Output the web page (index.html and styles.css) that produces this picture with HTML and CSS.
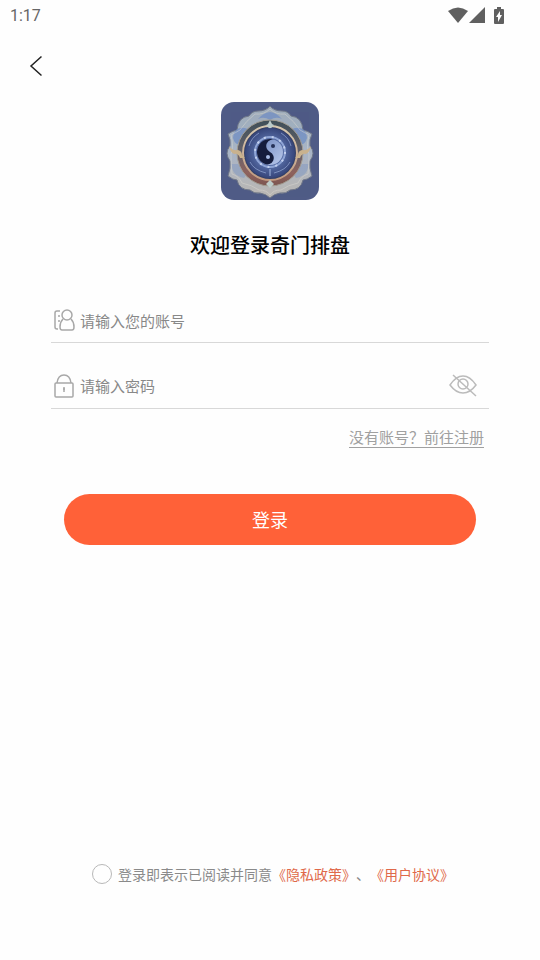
FILE: index.html
```html
<!DOCTYPE html>
<html lang="zh-CN">
<head>
    <meta charset="UTF-8">
    <meta name="viewport" content="width=device-width, initial-scale=1.0">
    <title>登录</title>
    <link rel="stylesheet" href="styles.css">
</head>
<body>

<div class="status-bar">
    <span class="time">1:17</span>
    <div class="status-icons">
        <svg width="20" height="16" viewBox="0 0 20 16"><path d="M0 4Q10-3 20 4L10 16Z"/></svg>
        <svg width="16" height="16" viewBox="0 0 16 16"><path d="M16 0V16H0Z"/></svg>
        <svg class="battery" width="10" height="17" viewBox="0 0 10 17">
            <path d="M3 0H7V2H9Q10 2 10 3V16Q10 17 9 17H1Q0 17 0 16V3Q0 2 1 2H3Z"/>
            <path class="bolt" d="M6 4L2 10H4V15L8 8H6Z"/>
        </svg>
    </div>
</div>

<header class="nav">
    <button type="button" class="back" aria-label="返回">
        <svg width="14" height="22" viewBox="0 0 14 22"><path d="M12.500 1.500L2 11L12.500 20.500"/></svg>
    </button>
</header>

<main>
    <svg class="logo" viewBox="0 0 98 98" aria-hidden="true">
        <defs>
            <linearGradient id="petal" x1="0" y1="0" x2="0" y2="1">
                <stop offset="0" stop-color="#9dabb9"/>
                <stop offset="0.5" stop-color="#a9b5c6"/>
                <stop offset="1" stop-color="#bbb7b2"/>
            </linearGradient>
            <linearGradient id="ring" x1="0" y1="0" x2="0" y2="1">
                <stop offset="0" stop-color="#3f4f58"/>
                <stop offset="0.5" stop-color="#65626c"/>
                <stop offset="0.8" stop-color="#8e625d"/>
                <stop offset="1" stop-color="#7c5550"/>
            </linearGradient>
            <linearGradient id="gold" x1="0" y1="0" x2="0" y2="1">
                <stop offset="0" stop-color="#d6c8b0"/>
                <stop offset="1" stop-color="#c39b80"/>
            </linearGradient>
            <radialGradient id="orb">
                <stop offset="0" stop-color="#7c93c9"/>
                <stop offset="0.6" stop-color="#52679f"/>
                <stop offset="1" stop-color="#36457a"/>
            </radialGradient>
            <linearGradient id="yang" x1="0" y1="0" x2="1" y2="1">
                <stop offset="0" stop-color="#6f86bd"/>
                <stop offset="1" stop-color="#b9c9ec"/>
            </linearGradient>
        </defs>
        <rect width="98" height="98" fill="#4f5b86"/>
        <!-- lotus -->
        <path fill="url(#petal)" stroke="#6f7788" d="M49 4Q53 9 61 9Q67 9 70 14Q81 15 82 28Q87 29 91 32Q88 38 89 44Q95 51 89 59Q88 66 91 74Q86 78 82 78Q80 88 69 88Q65 92 59 91Q53 92 49 96Q45 92 39 91Q33 92 29 88Q18 88 16 78Q12 78 7 74Q10 66 9 59Q3 51 9 44Q10 38 7 32Q11 29 16 28Q17 15 28 14Q31 9 37 9Q45 9 49 4Z"/>
        <g fill="#7490c4" opacity="0.8">
            <path d="M37 17Q42 11 49 10Q56 11 61 17Q55 14 49 18Q43 14 37 17Z"/>
            <path d="M12 36Q13 24 24 26Q29 27 28 30L18 42Q14 43 12 36Z"/>
            <path d="M86 36Q85 24 74 26Q69 27 70 30L80 42Q84 43 86 36Z"/>
            <path d="M11 62Q10 73 23 76L25 73L17 62Z" opacity="0.5"/>
            <path d="M87 62Q88 73 75 76L73 73L81 62Z" opacity="0.5"/>
        </g>
        <g fill="none" stroke="#dedbd3" opacity="0.45">
            <path d="M49 7Q43 13 34 12Q25 19 19 28Q14 31 10 33Q13 45 10 52Q10 63 11 72Q18 74 21 81Q31 83 38 88Q46 88 49 93"/>
            <path d="M49 7Q55 13 64 12Q73 19 79 28Q84 31 88 33Q85 45 88 52Q88 63 87 72Q80 74 77 81Q67 83 60 88Q52 88 49 93"/>
        </g>
        <!-- ring -->
        <circle cx="49" cy="51" r="33" fill="url(#ring)" stroke="#a29c91"/>
        <circle cx="49" cy="51" r="27" fill="#354166" stroke="url(#gold)" stroke-width="2"/>
        <path fill="#c9b28e" d="M8 44Q11 49 17 48Q21 49 21 53L24 56L19 56Q17 51 13 52Q9 50 8 44ZM90 44Q87 49 81 48Q77 49 77 53L74 56L79 56Q81 51 85 52Q89 50 90 44Z"/>
        <path fill="#bccbc9" d="M49 18L51 22L53 23L51 25L49 28L47 25L45 23L47 22ZM49 78L51 80L53 82L51 84L49 86L47 84L45 82L47 80Z"/>
        <!-- orb -->
        <circle cx="49" cy="51" r="25" fill="url(#orb)"/>
        <g fill="none" stroke="#a5b9e2">
            <path d="M28 44Q30 36 38 31M60 31Q68 36 70 44M29 60Q33 68 45 71M53 71Q65 68 69 60" opacity="0.6"/>
            <circle cx="49" cy="50" r="15" stroke="#8fa5d6" stroke-width="2"/>
            <circle cx="49" cy="50" r="15" stroke="#c3d0ee" stroke-width="2" stroke-dasharray="2 6"/>
            <path d="M49 67V74"/>
        </g>
        <!-- yin yang -->
        <circle cx="49" cy="50" r="13" fill="url(#yang)"/>
        <path fill="#151c3c" d="M49 37A13 13 0 0 0 49 63A6.500 6.500 0 0 0 49 50A6.500 6.500 0 0 1 49 37Z" transform="rotate(25 49 50)"/>
        <circle cx="52" cy="44" r="2" fill="#263158"/>
        <circle cx="47" cy="55" r="2" fill="#a9bce5"/>
    </svg>
    <h1>欢迎登录奇门排盘</h1>

    <form id="loginForm">
        <div class="field">
            <label for="account" aria-label="账号">
                <svg width="22" height="22" viewBox="0 0 22 22">
                    <path d="M7 2H4Q2 2 2 4V18Q2 20 4 20H5M5 7H7M5 12H7"/>
                    <circle cx="14" cy="6" r="5"/>
                    <path d="M10 10Q7 13 7 18Q7 21 9 21H19Q21 21 21 18Q21 13 18 10"/>
                </svg>
            </label>
            <input type="text" id="account" name="account" placeholder="请输入您的账号">
        </div>
        <div class="field">
            <label for="password" aria-label="密码">
                <svg width="22" height="24" viewBox="0 0 22 24">
                    <rect x="2" y="9" width="18" height="14" rx="1"/>
                    <path d="M4 9Q5 1 11 1Q17 1 18 9"/>
                    <path d="M11 13V18M10 15H12"/>
                </svg>
            </label>
            <input type="password" id="password" name="password" placeholder="请输入密码">
            <button type="button" class="eye" aria-label="显示密码">
                <svg width="28" height="24" viewBox="0 0 28 24">
                    <path d="M1 11Q7 2 14 2Q21 2 27 11Q21 19 14 19Q7 19 1 11Z"/>
                    <circle cx="14" cy="10" r="5"/>
                    <path d="M4 1L27 22"/>
                </svg>
            </button>
        </div>
        <a class="register" href="#register">没有账号？前往注册</a>
        <button type="submit" class="submit">登录</button>
    </form>
</main>

<footer>
    <input type="checkbox" id="agree" name="agree" form="loginForm">
    <p><label for="agree">登录即表示已阅读并同意</label><a href="#privacy">《隐私政策》</a>、<a href="#terms">《用户协议》</a></p>
</footer>

</body>
</html>
```

FILE: styles.css
```css
* {
    box-sizing: border-box;
}
body {
    display: flex;
    flex-direction: column;
    min-height: 100vh;
    margin: 0;
    background-color: #fefefe;
    font-family: "Noto Sans CJK SC", sans-serif;
    text-spacing-trim: space-all;
}
svg {
    display: block;
}
button {
    padding: 0;
    border: none;
    background: none;
    font-family: inherit;
    cursor: pointer;
}
.status-bar {
    display: flex;
    justify-content: space-between;
    align-items: center;
    height: 30px;
    padding: 0 36px 0 10px;
    color: #666;
    font-family: Roboto, sans-serif;
    font-size: 16px;
}
.status-icons {
    display: flex;
    align-items: center;
    gap: 1px;
    fill: #606060;
}
.battery {
    margin-left: 8px;
}
.bolt {
    fill: #fff;
}
.nav {
    height: 72px;
    padding: 20px 24px;
}
.back {
    display: flex;
    align-items: center;
    justify-content: center;
    width: 24px;
    height: 32px;
}
.back svg {
    fill: none;
    stroke: #222;
    stroke-width: 1.5;
}
main {
    padding: 0 51px;
}
.logo {
    width: 98px;
    height: 98px;
    margin: 0 auto;
    border-radius: 13px;
}
h1 {
    margin: 30px 0 46px;
    color: #000;
    font-size: 20px;
    font-weight: 500;
    line-height: 30px;
    text-align: center;
}
form {
    display: flex;
    flex-direction: column;
}
.field {
    display: flex;
    align-items: center;
    gap: 5px;
    height: 66px;
    padding: 20px 12px 0 2px;
    border-bottom: 1px solid #d8d8d8;
}
.field:first-child {
    height: 37px;
    padding-top: 0;
    padding-bottom: 8px;
}
.field svg {
    fill: none;
    stroke: #a8a8a8;
    stroke-width: 1.5;
}
.field .eye svg {
    stroke: #bbb;
}
.field input {
    flex: 1;
    min-width: 0;
    padding: 0;
    border: none;
    outline: none;
    background: none;
    color: #333;
    font-family: inherit;
    font-size: 15px;
}
.field input::placeholder {
    color: #888;
}
.register {
    align-self: flex-end;
    margin: 18px 5px 46px 0;
    border-bottom: 1px solid #a0a0a0;
    color: #a0a0a0;
    font-size: 15px;
    line-height: 20px;
    text-decoration: none;
}
.submit {
    height: 51px;
    margin: 0 13px;
    padding-bottom: 2px;
    border-radius: 26px;
    background-color: #ff6138;
    color: #fff;
    font-size: 18px;
}
footer {
    display: flex;
    justify-content: center;
    align-items: center;
    gap: 6px;
    margin-top: auto;
    padding: 0 0 76px 6px;
    color: #8a8a8a;
    font-size: 14px;
    line-height: 20px;
}
footer p {
    margin: 0;
}
footer input {
    appearance: none;
    width: 20px;
    height: 20px;
    margin: 0;
    border: 1px solid #b8b8b8;
    border-radius: 50%;
}
footer input:checked {
    background-color: #ff6138;
}
footer a {
    color: #e0694a;
    text-decoration: none;
}
```
